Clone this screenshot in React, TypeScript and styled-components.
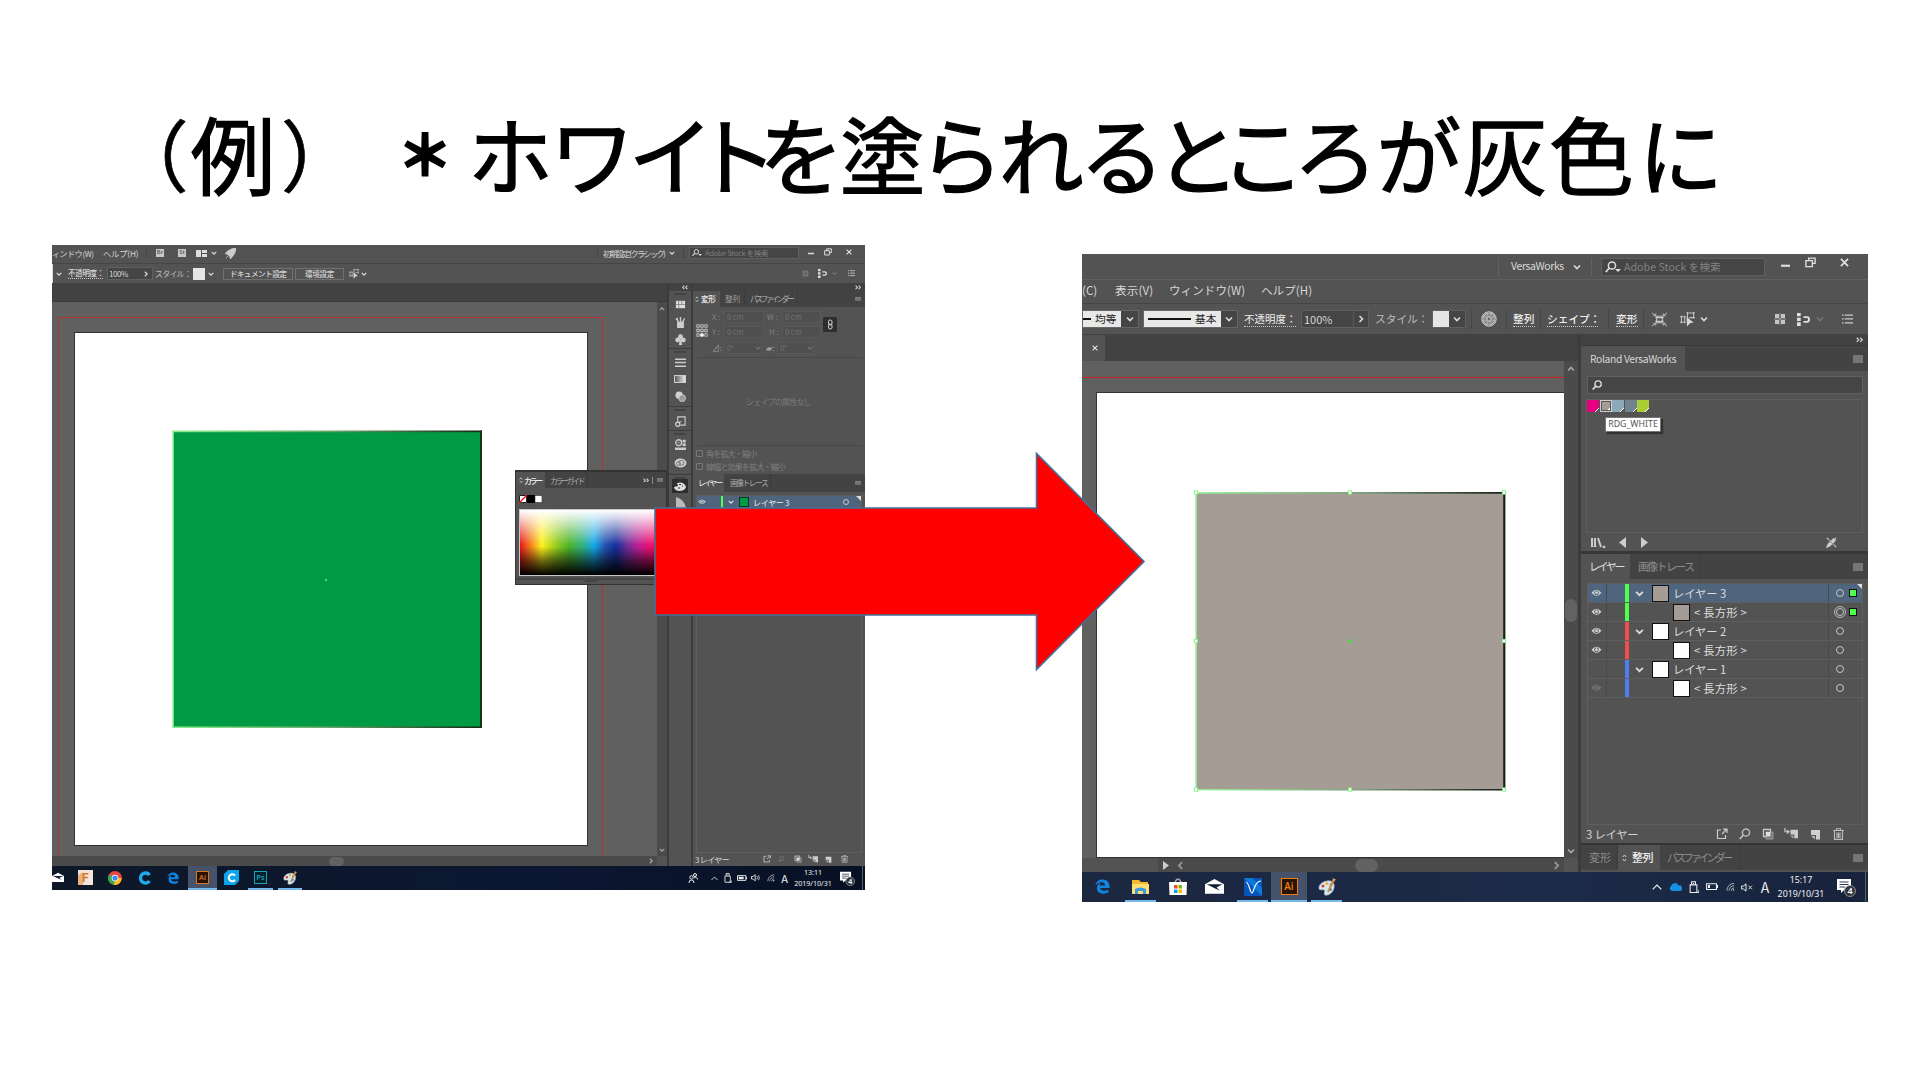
import React from "react";
import styled, { createGlobalStyle } from "styled-components";

const Global = createGlobalStyle`
  * { box-sizing: border-box; }
  body { margin: 0; background: #fff; overflow: hidden; font-family: "Noto Sans CJK JP", "Noto Sans", sans-serif; }
  svg { display: block; }
`;

/* ---------- slide ---------- */
const Slide = styled.main`
  position: relative; width: 1920px; height: 1080px; background: #fff;
  display: flex; flex-direction: column; overflow: hidden;
`;
const Title = styled.h1`
  margin: 0; height: 245px; padding: 90px 0 0 156px; white-space: nowrap;
  font-size: 85px; line-height: 124px; font-weight: 400; color: #000; display: flex;
  font-feature-settings: "palt"; -webkit-text-stroke: 1.3px #000;
`;
const Glyph = styled.span<{ $gap: number; $w: number; $s?: number; $stroke?: number }>`
  flex: none; width: ${p => p.$w}px; margin-left: ${p => p.$gap}px; font-size: ${p => p.$s || 85}px;
  -webkit-text-stroke-width: ${p => p.$stroke ?? 1.3}px;
  display: flex; justify-content: center;
`;
const Shots = styled.div`display: flex; align-items: flex-start; padding-left: 52px; gap: 217px;`;
const Shot = styled.section<{ $w: number; $h: number; $top?: number }>`
  flex: none; width: ${p => p.$w}px; height: ${p => p.$h}px; margin-top: ${p => p.$top || 0}px;
  background: #535353; display: flex; flex-direction: column; overflow: hidden;
`;
const ArrowLayer = styled.svg`position: absolute; left: 654px; top: 450px;`;

/* ---------- shared parts ---------- */
const Bar = styled.div<{ $h: number; $bg?: string; $line?: string; $pb?: number }>`
  flex: none; height: ${p => p.$h}px; display: flex; align-items: center; overflow: hidden;
  background: ${p => p.$bg || "#535353"}; padding-bottom: ${p => p.$pb || 0}px;
  border-bottom: ${p => (p.$line ? `1px solid ${p.$line}` : "0")};
`;
const Cell = styled.div<{ $ml?: number; $w?: number; $up?: number }>`
  flex: none; margin-left: ${p => p.$ml || 0}px; width: ${p => (p.$w ? p.$w + "px" : "auto")};
  margin-bottom: ${p => p.$up || 0}px; display: flex; align-items: center;
`;
const Plate = styled(Cell)`height: 18px; background: #e8e8e8;`;
const Label = styled.span<{ $ml?: number; $w?: number; $s: number; $c?: string; $ls?: number; $b?: boolean; $u?: boolean; $up?: number }>`
  flex: none; margin-left: ${p => p.$ml || 0}px; width: ${p => (p.$w ? p.$w + "px" : "auto")};
  margin-bottom: ${p => p.$up || 0}px; font-size: ${p => p.$s}px; line-height: ${p => Math.round(p.$s * 1.35)}px;
  color: ${p => p.$c || "#d6d6d6"}; letter-spacing: ${p => p.$ls || 0}px; white-space: nowrap;
  font-weight: ${p => (p.$b ? 500 : 400)};
  border-bottom: ${p => (p.$u ? "1px dotted #c8c8c8" : "0")};
`;
const Field = styled.div<{ $ml?: number; $mt?: number; $w: number; $h: number; $bg?: string; $bd?: string }>`
  flex: none; margin-left: ${p => p.$ml || 0}px; margin-top: ${p => p.$mt || 0}px; width: ${p => p.$w}px; height: ${p => p.$h}px;
  background: ${p => p.$bg || "#454545"}; border: 1px solid ${p => p.$bd || "#5f5f5f"};
  display: flex; align-items: center; overflow: hidden;
`;
const PushButton = styled(Field)`background: #535353; border-color: #707070; justify-content: center;`;
const Rule = styled.i<{ $ml?: number; $h: number; $c?: string }>`
  flex: none; width: 1px; margin-left: ${p => p.$ml || 0}px; height: ${p => p.$h}px; background: ${p => p.$c || "#474747"};
`;
const Chip = styled.i<{ $w: number; $h: number; $c: string; $ml?: number; $bd?: string }>`
  flex: none; display: block; width: ${p => p.$w}px; height: ${p => p.$h}px; background: ${p => p.$c};
  margin-left: ${p => p.$ml || 0}px; border: ${p => (p.$bd ? `1px solid ${p.$bd}` : "0")};
`;
const Body = styled.div`flex: 1; min-height: 0; display: flex;`;
const Column = styled.div<{ $w?: number; $bg?: string; $pl?: number }>`
  ${p => (p.$w ? `flex: none; width: ${p.$w}px;` : "flex: 1; min-width: 0;")}
  background: ${p => p.$bg || "#535353"}; padding-left: ${p => p.$pl || 0}px;
  display: flex; flex-direction: column;
`;
const Canvas = styled.div<{ $pt: number; $pl: number }>`
  flex: 1; min-height: 0; min-width: 0; background: #606060; overflow: hidden;
  padding: ${p => p.$pt}px 0 0 ${p => p.$pl}px;
`;
const Bleed = styled.div<{ $w: number; $h: number; $pt: number; $pl: number; $c: string; $open?: boolean }>`
  width: ${p => p.$w}px; height: ${p => p.$h}px; border: ${p => (p.$open ? "0" : "1px")} solid ${p => p.$c};
  border-top: 1px solid ${p => p.$c}; border-bottom: 0; padding: ${p => p.$pt}px 0 0 ${p => p.$pl}px;
`;
const Artboard = styled.div<{ $w: number; $h: number; $pt: number; $pl: number }>`
  width: ${p => p.$w}px; height: ${p => p.$h}px; background: #fff; border: 1px solid #333;
  padding: ${p => p.$pt}px 0 0 ${p => p.$pl}px;
`;
const Scroll = styled.div<{ $w: number }>`
  flex: none; width: ${p => p.$w}px; background: #4b4b4b; display: flex; flex-direction: column;
  align-items: center; justify-content: space-between; padding: 4px 0 3px;
`;
const Thumb = styled.i<{ $w: number; $h: number; $ml?: number }>`
  flex: none; display: block; width: ${p => p.$w}px; height: ${p => p.$h}px; border-radius: 7px; background: #626262;
  margin-left: ${p => p.$ml || 0}px;
`;
const Tab = styled.div<{ $w: number; $on?: boolean; $pl?: number }>`
  flex: none; width: ${p => p.$w}px; align-self: stretch; padding-left: ${p => p.$pl || 0}px; display: flex; align-items: center;
  background: ${p => (p.$on ? "#535353" : "#434343")}; border-right: 1px solid ${p => (p.$on ? "#535353" : "#3b3b3b")};
`;
const Grow = styled.div`flex: 1;`;

/* ---------- small icons ---------- */
type S = { w?: number; h?: number; c?: string };
const Chev = ({ w = 6, c = "#dcdcdc", d = "down" }: S & { d?: "down" | "up" | "left" | "right" }) => {
  const r = { down: 0, up: 180, left: 90, right: -90 }[d];
  return <svg width={w} height={w} viewBox="0 0 8 8"><path d="M1 2.5L4 5.5L7 2.5" transform={`rotate(${r} 4 4)`} fill="none" stroke={c} strokeWidth="1.6" /></svg>;
};
const Dbl = ({ w = 6, left }: { w?: number; left?: boolean }) => (
  <svg width={w} height={w * 0.8} viewBox="0 0 10 8"><path d="M1 1L4 4L1 7M6 1L9 4L6 7" transform={left ? "rotate(180 5 4)" : ""} fill="none" stroke="#d0d0d0" strokeWidth="1.8" /></svg>
);
const Menu = ({ w = 7, c = "#a8a8a8" }: S) => (
  <svg width={w} height={w * 0.8} viewBox="0 0 10 8"><path d="M0 1H10M0 3H10M0 5H10M0 7H10" stroke={c} strokeWidth="1.1" /></svg>
);
const Diamond = ({ w = 4 }: S) => (
  <svg width={w} height={w * 1.6} viewBox="0 0 5 8"><path d="M.8 3L2.5 1L4.2 3M.8 5L2.5 7L4.2 5" fill="none" stroke="#d8d8d8" strokeWidth="1" /></svg>
);
const Search = ({ w = 9, c = "#e0e0e0", more }: S & { more?: boolean }) => (
  <svg width={w} height={w * 0.75} viewBox="0 0 16 12"><circle cx="7" cy="4.5" r="3.6" fill="none" stroke={c} strokeWidth="1.5" /><path d="M4.3 7L.8 11" stroke={c} strokeWidth="1.8" />{more && <path d="M10 8H16L13 11Z" fill={c} />}</svg>
);
const Min = ({ w = 7 }: S) => <svg width={w} height={w} viewBox="0 0 10 10"><path d="M0 7.5H10" stroke="#ddd" strokeWidth="2.4" /></svg>;
const Restore = ({ w = 8 }: S) => <svg width={w} height={w} viewBox="0 0 12 12"><path d="M4 4V1.2H11V7H8M1 4H8V10.5H1Z" fill="none" stroke="#ddd" strokeWidth="1.5" /></svg>;
const Close = ({ w = 6, c = "#e0e0e0" }: S) => <svg width={w} height={w} viewBox="0 0 8 8"><path d="M.8.8L7.2 7.2M7.2.8L.8 7.2" stroke={c} strokeWidth="1.5" /></svg>;
const Pick = ({ w = 10 }: S) => (
  <svg width={w} height={w} viewBox="0 0 16 16"><path d="M0 5H6M0 11H6M1.500 4V12M5 4V12M8 0V6M14.500 0V7M7 1H16M10 6H16" fill="none" stroke="#c4c4c4" strokeWidth="1.1" /><path d="M7 5L14.500 11.500L11 11.700L7.500 15.500Z" fill="#d8d8d8" /></svg>
);
const Isolate = ({ w = 15 }: S) => (
  <svg width={w} height={w} viewBox="0 0 16 16"><path d="M5 4.500H11V11.500H5ZM3.500 6H12.500M3.500 10H12.500" fill="none" stroke="#c8c8c8" strokeWidth="1.100" /><path d="M0 1L4 4M16 1L12 4M0 15L4 12M16 15L12 12M1.500 4H4V1.500M14.500 4H12V1.500M1.500 12H4V14.500M14.500 12H12V14.500" stroke="#c8c8c8" strokeWidth="1" fill="none" /></svg>
);
const Dots = ({ w = 8, c = "#777" }: S) => <svg width={w} height={w} viewBox="0 0 12 12"><path d="M1 1H5V5H1ZM7 1H11V5H7ZM1 7H5V11H1ZM7 7H11V11H7Z" fill={c} /><path d="M6 0V12M0 6H12" stroke={c} strokeWidth=".6" /></svg>;
const Magnet = ({ w = 9 }: S) => <svg width={w} height={w} viewBox="0 0 14 14"><path d="M0 0H4V3.500H0ZM0 5H4V8.500H0ZM0 10H4V14H0Z" fill="#e0e0e0" /><path d="M7 4.500H10.500A2.500 2.500 0 0 1 10.500 9.500H7" fill="none" stroke="#e0e0e0" strokeWidth="2" /></svg>;
const List = ({ w = 7 }: S) => <svg width={w} height={w * 0.9} viewBox="0 0 10 9"><path d="M0 1H1.500M0 4.500H1.500M0 8H1.500M2.500 1H10M2.500 4.500H10M2.500 8H10" stroke="#ccc" strokeWidth="1.200" /></svg>;
const Eye = ({ w = 10, c = "#d4d4d4" }: S) => <svg width={w} height={w * 0.7} viewBox="0 0 14 10"><path d="M.5 5Q7-3 13.500 5Q7 13 .5 5Z" fill={c} /><circle cx="7" cy="5" r="3" fill="#535353" /><circle cx="7" cy="4.800" r="1.900" fill={c} /></svg>;
const Globe = () => <svg width="16" height="16" viewBox="0 0 16 16"><circle cx="8" cy="8" r="7.200" fill="#a9a9a9" stroke="#ccc" /><path d="M8 1V15M1 8H15M3 3L13 13M13 3L3 13" stroke="#707070" strokeWidth=".7" /><circle cx="8" cy="8" r="3.600" fill="#bbb" stroke="#707070" strokeWidth=".7" /><circle cx="8" cy="8" r="1.400" fill="#666" /></svg>;

const Export = ({ w }: { w: number }) => <svg width={w} height={w} viewBox="0 0 12 12"><path d="M5 2H1.500V10.500H9.500V7M7 1.200H11V5M11 1L6 6" fill="none" stroke="#ccc" strokeWidth="1.200" /></svg>;
const Mask = ({ w }: { w: number }) => <svg width={w} height={w} viewBox="0 0 12 12"><path d="M1.500 1.500H8.500V8.500H1.500Z" fill="none" stroke="#c8c8c8" strokeWidth="1.300" /><path d="M4 4H11V11H4Z" fill="#777" stroke="#aaa" strokeWidth=".8" /><path d="M4 4H8.500V8.500H4Z" fill="#ddd" /></svg>;
const SubLayer = ({ w }: { w: number }) => <svg width={w} height={w * 0.8} viewBox="0 0 15 12"><path d="M1 0V4H5M3 2L5.500 4L3 6" fill="none" stroke="#ccc" strokeWidth="1.200" /><path d="M7 2H15V11H11V7H7Z" fill="#ccc" /><path d="M6.500 8H10V11.500Z" fill="#aaa" /></svg>;
const NewLayer = ({ w }: { w: number }) => <svg width={w} height={w} viewBox="0 0 11 11"><path d="M1 1H10V10.500H6V6H1Z" fill="#d0d0d0" /><path d="M1 7H5V10.500Z" fill="#bbb" /></svg>;
const Trash = ({ w }: { w: number }) => <svg width={w} height={w * 1.1} viewBox="0 0 11 12"><path d="M0 2.500H11M3.500 2V.700H7.500V2M1.500 3V11.300H9.500V3M4 4.500V10M5.500 4.500V10M7 4.500V10" fill="none" stroke="#bdbdbd" strokeWidth="1.100" /></svg>;

/* ---------- taskbar ---------- */
const TaskRow = styled.div<{ $h: number; $bg: string }>`
  flex: none; height: ${p => p.$h}px; background: ${p => p.$bg}; display: flex; align-items: stretch; overflow: hidden;
`;
const Task = styled.div<{ $w: number; $ml?: number; $on?: boolean; $run?: boolean }>`
  flex: none; width: ${p => p.$w}px; margin-left: ${p => p.$ml || 0}px; display: flex; align-items: center; justify-content: center;
  background: ${p => (p.$on ? "#465269" : "transparent")};
  border-bottom: ${p => (p.$run ? "2px solid #76b9ed" : "2px solid transparent")}; border-top: 1px solid transparent;
`;
const Tray = styled.div<{ $ml: number; $w: number }>`
  flex: none; margin-left: ${p => p.$ml}px; width: ${p => p.$w}px; display: flex; align-items: center; justify-content: center;
`;
const Clock = styled.div<{ $ml: number; $w: number; $s: number; $lh: number }>`
  flex: none; margin-left: ${p => p.$ml}px; width: ${p => p.$w}px; font: ${p => p.$s}px/${p => p.$lh}px "Noto Sans", sans-serif; color: #f0f2f5;
  white-space: nowrap; display: flex; flex-direction: column; justify-content: center; align-items: center;
`;
const Adobe = styled.div<{ $s: number; $c: string; $bg: string }>`
  width: ${p => p.$s}px; height: ${p => p.$s}px; border: ${p => (p.$s > 14 ? 1.5 : 1)}px solid ${p => p.$c}; background: ${p => p.$bg}; color: ${p => p.$c};
  font: 600 ${p => p.$s * 0.58}px/1 "Open Sans", sans-serif; display: flex; align-items: center; justify-content: center;
`;
const MailI = ({ w }: { w: number }) => <svg width={w} height={w * 0.78} viewBox="0 0 18 14"><path d="M0 5L9 0L18 5V14H0Z" fill="#fff" /><path d="M1.500 5H16.500L11 8L14 11Z" fill="#14203a" /></svg>;
const EdgeI = ({ w }: { w: number }) => <svg width={w} height={w} viewBox="0 0 16 16"><path d="M.5 7C1.200 2.500 4.500.500 8.300.500C13 .500 15.500 4 15.500 8V9.500H5.500C5.700 12.300 10.500 13.700 14.300 11.500V14.500C8.500 17.300 2 15.200 2 9.600C2 7 3.800 5 6 4.200C5.300 5 5 6.200 5 7H10.700C10.700 4.500 9.200 3.500 7.200 3.500C4.500 3.500 2 5 .5 7Z" fill="#1383e0" /></svg>;
const PaintI = ({ w }: { w: number }) => <svg width={w} height={w} viewBox="0 0 18 18"><path d="M9 3C14 2 17 5 16 10C15 15 10 18 7 17C5 16 8 13 6 12C4 11 1 13 1 10C1 6 5 3.500 9 3Z" fill="#d9e6ee" stroke="#9db6c4" strokeWidth=".7" /><circle cx="5" cy="8" r="1.500" fill="#d9403a" /><circle cx="9" cy="5.500" r="1.500" fill="#e8b32e" /><circle cx="13" cy="7" r="1.400" fill="#4ea646" /><circle cx="12.500" cy="11.500" r="1.400" fill="#3c87d0" /><path d="M15.500 2L10 14" stroke="#c98b4c" strokeWidth="2" /><path d="M14.500 0L18 1.500L15.500 4Z" fill="#d9a066" /></svg>;
const Up = ({ w }: { w: number }) => <svg width={w} height={w * 0.6} viewBox="0 0 10 6"><path d="M.7 5.300L5 1L9.300 5.300" fill="none" stroke="#eee" strokeWidth="1.200" /></svg>;
const Usb = ({ w }: { w: number }) => <svg width={w} height={w * 1.25} viewBox="0 0 10 13"><path d="M2.500 4V.700H6.500V4M1 4H8V12H1ZM4 2.500H5" fill="none" stroke="#eee" strokeWidth="1.100" /><path d="M6 12H10V9.500" stroke="#eee" fill="none" /></svg>;
const Battery = ({ w, full }: { w: number; full?: boolean }) => <svg width={w} height={w * 0.6} viewBox="0 0 12 7"><path d="M.6.600H10.500V6.400H.600ZM11.500 2V5" fill="none" stroke="#eee" strokeWidth="1.100" /><path d={full ? "M2 2H8V5H2Z" : "M2 2H4V5H2Z"} fill="#eee" /></svg>;
const Wifi = ({ w }: { w: number }) => <svg width={w} height={w} viewBox="0 0 10 10"><path d="M1 9A8 8 0 0 1 9 1M3.500 9A5.500 5.500 0 0 1 9 3.500M6 9A3 3 0 0 1 9 6" fill="none" stroke="#b8bec8" strokeWidth="1" /><path d="M7.500 9A1.500 1.500 0 0 1 9 7.500V9Z" fill="#fff" /></svg>;
const Vol = ({ w, mute }: { w: number; mute?: boolean }) => <svg width={w} height={w * 0.75} viewBox="0 0 12 9"><path d="M.6 3H2.500L5 .800V8.200L2.500 6H.600Z" fill="none" stroke="#eee" /><path d={mute ? "M7.500 2.700L11 6.300M11 2.700L7.500 6.300" : "M7 2.500Q8.300 4.500 7 6.500M9 1.500Q11 4.500 9 7.500"} fill="none" stroke="#ddd" /></svg>;
const Notice = ({ w }: { w: number }) => <svg width={w} height={w} viewBox="0 0 19 19"><path d="M0 1H14V12H7L4 15V12H0Z" fill="#fff" /><path d="M2.500 4H11.500M2.500 6.500H11.500M2.500 9H8" stroke="#2a3850" /><circle cx="13" cy="13" r="5.500" fill="#30353d" stroke="#aaa" strokeWidth=".8" /><text x="13" y="16.300" textAnchor="middle" fontSize="9" fontWeight="600" fontFamily="Noto Sans" fill="#fff">4</text></svg>;

/* ---------- layers ---------- */
const LayerRow = styled.div<{ $on?: boolean; $h?: number }>`
  flex: none; height: ${p => p.$h || 19}px; display: flex; align-items: center; background: ${p => (p.$on ? "#4f657d" : "#535353")};
  border-bottom: 1px solid #5e5e5e;
`;
const RingMark = styled.i<{ $s: number; $dbl?: boolean }>`
  display: block; width: ${p => p.$s}px; height: ${p => p.$s}px; border: 1.4px solid #c8c8c8; border-radius: 50%;
  outline: ${p => (p.$dbl ? "1px solid #b8b8b8" : "0")}; outline-offset: 1px;
`;
const Frame = styled.div<{ $m: string; $h: number }>`
  flex: none; margin: ${p => p.$m}; height: ${p => p.$h}px; border: 1px solid #5e5e5e; display: flex; flex-direction: column; overflow: hidden;
`;
const Corner = styled.i`align-self: flex-start; border-top: 5px solid #ddd; border-left: 5px solid transparent; width: 0; height: 0;`;
const Vert = styled.div<{ $w: number; $ml?: number; $c?: string }>`
  flex: none; align-self: stretch; width: ${p => p.$w}px; margin-left: ${p => p.$ml || 0}px; background: ${p => p.$c || "#494949"};
`;
const layers = [
  { name: "レイヤー 3", child: false, c: "#4eff4e", thumb: "#a59c96", eye: "#c6d4e0", on: true, sel: true },
  { name: "< 長方形 >", child: true, c: "#4eff4e", thumb: "#a59c96", eye: "#d4d4d4", sel: true },
  { name: "レイヤー 2", child: false, c: "#f24c4c", thumb: "#fff", eye: "#d4d4d4" },
  { name: "< 長方形 >", child: true, c: "#f24c4c", thumb: "#fff", eye: "#d4d4d4" },
  { name: "レイヤー 1", child: false, c: "#4f7df2", thumb: "#fff", eye: "" },
  { name: "< 長方形 >", child: true, c: "#4f7df2", thumb: "#fff", eye: "#757575" },
];

/* ---------- transform panel ---------- */
const Pad = styled.div<{ $h: number; $pl?: number }>`flex: none; height: ${p => p.$h}px; padding-left: ${p => p.$pl || 0}px; display: flex; align-items: center;`;
const Rows = styled.div`flex: none; width: 110px; display: flex; flex-direction: column;`;
const Line = styled.i<{ $c?: string }>`flex: none; display: block; height: 1px; margin: 0 3px 0 4px; background: ${p => p.$c || "#484848"};`;
const Dim = styled(Field)`background: #4f4f4f; border-color: #585858; padding-left: 2px; font-size: 7.5px; color: #747474; line-height: 10px; justify-content: space-between;`;
const Check = styled.i`flex: none; width: 7px; height: 7px; border: 1px solid #7a7a7a; border-radius: 1px;`;

/* ---------- icon dock ---------- */
const DockGroup = styled.div<{ $h: number }>`
  flex: none; height: ${p => p.$h}px; border-bottom: 1px solid #3d3d3d; display: flex; flex-direction: column; align-items: center;
  padding-top: 2px;
`;
const Handle = styled.i`flex: none; width: 12px; height: 2px; background: #444;`;
const DockIcon = styled.div<{ $h: number; $on?: boolean }>`
  flex: none; width: 16px; height: ${p => p.$h}px; display: flex; align-items: center; justify-content: center;
  background: ${p => (p.$on ? "#2e2e2e" : "transparent")};
`;
const D = ({ children }: { children: React.ReactNode }) => <svg width="11" height="11" viewBox="0 0 12 12">{children}</svg>;

/* ---------- floating colour panel ---------- */
const FloatPanel = styled.div`
  position: absolute; left: 515px; top: 470px; width: 152px; height: 115px; background: #535353; border: 1px solid #333;
  border-top-width: 2px; display: flex; flex-direction: column;
`;
const Spectrum = styled.div`
  flex: none; height: 67px; margin: 6px 0 0 3px; border: 1px solid #c8c8c8;
  background:
    linear-gradient(180deg, #fff 0%, rgba(255,255,255,.8) 12%, rgba(255,255,255,.35) 36%, rgba(255,255,255,0) 54%, rgba(0,0,0,0) 56%, rgba(0,0,0,.55) 78%, #000 100%),
    linear-gradient(90deg, #e8141c 0%, #f58a1c 8%, #fff01c 15%, #8cc820 26%, #4cb42c 34%, #30b080 43%, #14a8e8 51%, #2450b0 59%, #14309c 66%, #7c2c98 75%, #c81c90 83%, #ee1070 90%, #e8142c 100%);
`;
const Grip = styled.div`flex: none; margin-top: 2px; height: 6px; border-top: 2px solid #444; display: flex; justify-content: center;`;

const Tooltip = styled.div`
  position: absolute; left: 1605px; top: 417px; width: 56px; height: 15px; background: #fff; border: 1px solid #777; color: #555;
  font: 8.8px/12px "Noto Sans", sans-serif; text-align: center; box-shadow: 2px 2px 1px rgba(0,0,0,.4); white-space: nowrap;
`;
const Swatch = styled.i<{ $c: string; $sel?: boolean }>`
  display: block; width: 12px; height: 12px; margin-right: .5px; background: linear-gradient(135deg, ${p => p.$c} 80%, #fff 80%, #fff 86%, #555 86%);
  border: ${p => (p.$sel ? "1px solid #d0d0d0" : "0")}; box-shadow: ${p => (p.$sel ? "inset 0 0 0 1px #555" : "none")};
`;

/* glyph, gap before it, ink width, optional size, optional stroke */
const titleGlyphs: [string, number, number, number?, number?][] = [
  ["（", 0, 21, 78, 0.6], ["例", 17, 78], ["）", 20, 22, 78, 0.6], ["＊", 90, 42, 53, 4], ["ホ", 27, 75], ["ワ", 13, 60], ["イ", 17, 62], ["ト", 18, 41],
  ["を", 7, 66], ["塗", 12, 77], ["ら", 13, 56], ["れ", 10, 81], ["る", 9, 63], ["と", 14, 56], ["こ", 11, 58], ["ろ", 11, 63],
  ["が", 12, 80], ["灰", 8, 78], ["色", 9, 77], ["に", 15, 70],
];

function LeftShot() {
  return (
    <Shot $w={813} $h={645}>
      <Bar $h={19} $line="#454545" $pb={2}>
        <Label $s={8} $w={42} $ls={-0.4}>ィンドウ(W)</Label>
        <Label $s={8.2} $w={36} $ml={9} $ls={-0.1}>ヘルプ(H)</Label>
        <Rule $h={12} $ml={7} />
        <Cell $ml={8}><Adobe $s={10} $c="#555" $bg="#c8c8c8">Br</Adobe></Cell>
        <Cell $ml={12}><Adobe $s={10} $c="#555" $bg="#c8c8c8">St</Adobe></Cell>
        <Cell $ml={9} $w={15}><svg width="11" height="7" viewBox="0 0 11 7"><path d="M0 0H5V7H0ZM6 0H11V3H6ZM6 4H11V7H6Z" fill="#ddd" /></svg></Cell>
        <Cell $w={14}><Chev /></Cell>
        <Cell><svg width="11" height="11" viewBox="0 0 12 12"><path d="M12 0C7 0 3 3 0 6L3 7L5 9L6 12C8 9 12 6 12 0ZM1 11L4 8" fill="#ccc" stroke="#ccc" strokeWidth=".8" /></svg></Cell>
        <Grow />
        <Rule $h={12} />
        <Label $s={8.2} $ml={5} $w={66} $ls={-1.65}>初期設定 (クラシック)</Label>
        <Cell $w={14}><Chev /></Cell>
        <Rule $h={12} />
        <Field $w={110} $h={12} $ml={5}><Cell $ml={2} $w={13}><Search more w={10} /></Cell><Label $s={7.4} $c="#808080" $ls={-0.25}>Adobe Stock を検索</Label></Field>
        <Cell $ml={9} $w={16} $up={3}><Min w={6} /></Cell><Cell $w={22} $up={3}><Restore /></Cell><Cell $w={19} $up={3}><Close /></Cell>
      </Bar>
      <Bar $h={20} $line="#414141">
        <Vert $w={1} $c="#ddd" />
        <Cell $ml={3} $w={12}><Chev /></Cell>
        <Label $s={7.5} $u $w={35} $b $ls={-0.3}>不透明度：</Label>
        <Field $w={46} $h={13} $ml={4}><Label $s={8} $ls={-0.4} $ml={1}>100%</Label><Cell $ml={15}><Chev d="right" /></Cell></Field>
        <Label $s={8} $ml={2} $w={38} $c="#bdbdbd" $ls={-0.8}>スタイル：</Label>
        <Chip $w={12} $h={12} $c="#e6e6e6" /><Cell $ml={3}><Chev /></Cell>
        <PushButton $w={70} $h={12} $ml={9}><Label $s={7.7} $b $ls={-0.6}>ドキュメント設定</Label></PushButton>
        <PushButton $w={49} $h={12} $ml={2}><Label $s={7.5} $b $ls={-0.3}>環境設定</Label></PushButton>
        <Cell $ml={5}><Pick /></Cell><Cell $ml={2}><Chev /></Cell>
        <Grow />
        <Dots w={7} /><Cell $ml={9}><Magnet w={9} /></Cell><Cell $ml={5}><Chev w={5} c="#888" /></Cell><Cell $ml={11} $w={17}><List /></Cell>
      </Bar>
      <Body>
        <Column>
          <Bar $h={18} $bg="#424242" $line="#3a3a3a" />
          <Body>
            <Canvas $pt={15} $pl={6}>
              <Bleed $w={545} $h={560} $pt={14} $pl={15} $c="#b43232">
                <Artboard $w={514} $h={514} $pt={97} $pl={97}>
                  <svg width="312" height="300" viewBox="0 0 312 300">
                    <defs><linearGradient id="edge"><stop offset="0" stopColor="#8cf08c" /><stop offset=".5" stopColor="#6ca86c" /><stop offset="1" stopColor="#122812" /></linearGradient></defs>
                    <rect x="1" y="1" width="308" height="296" fill="#009944" />
                    <path d="M1 298V2" stroke="#9ff59f" strokeWidth="1.500" />
                    <rect x="0" y="0.500" width="310" height="1.700" fill="url(#edge)" /><rect x="0" y="296.500" width="310" height="1.500" fill="url(#edge)" />
                    <path d="M309 .5V298" stroke="#14351a" strokeWidth="2" />
                    <circle cx="154" cy="150" r="1.200" fill="#5ccf7d" />
                  </svg>
                </Artboard>
              </Bleed>
            </Canvas>
            <Scroll $w={10}><Chev c="#aaa" d="up" /><Chev c="#aaa" /></Scroll>
          </Body>
          <Bar $h={10} $bg="#4a4a4a"><Thumb $w={15} $h={9} $ml={277} /><Grow /><Chev c="#aaa" d="right" /><Vert $w={10} $ml={3} $c="#535353" /></Bar>
        </Column>
        <Vert $w={2} $c="#3c3c3c" />
        <Column $w={22}>
          <Bar $h={7} $bg="#424242"><Cell $ml={13}><Dbl left w={6} /></Cell></Bar>
          <DockGroup $h={58}><Handle />
            <DockIcon $h={19}><D><path d="M1 2H11V10H1Z" fill="#ddd" /><path d="M1 6H11M4 2V10M7.500 2V6" stroke="#777" strokeWidth=".8" /></D></DockIcon>
            <DockIcon $h={17}><D><path d="M3 6H9V12H3ZM4 6L2 2M6 6V0M8 6L10.500 1.500M1 3L3 1" fill="#ccc" stroke="#ccc" strokeWidth="1.500" /></D></DockIcon>
            <DockIcon $h={17}><D><circle cx="6" cy="3" r="2.700" fill="#ccc" /><circle cx="3" cy="6.500" r="2.700" fill="#ccc" /><circle cx="9" cy="6.500" r="2.700" fill="#ccc" /><path d="M6 5L8 12H4Z" fill="#ccc" /></D></DockIcon>
          </DockGroup>
          <DockGroup $h={58}><Handle />
            <DockIcon $h={18}><D><path d="M0 2.500H12M0 6H12M0 10H12" stroke="#ccc" strokeWidth="1.700" /></D></DockIcon>
            <DockIcon $h={16}><svg width="12" height="9"><defs><linearGradient id="gd"><stop stopColor="#555" /><stop offset="1" stopColor="#eee" /></linearGradient></defs><rect x=".5" y=".5" width="11" height="7" fill="url(#gd)" stroke="#ccc" /></svg></DockIcon>
            <DockIcon $h={18}><D><circle cx="4.500" cy="4.500" r="4" fill="#d0d0d0" /><circle cx="7.800" cy="7.800" r="3.700" fill="#999" stroke="#ddd" strokeWidth=".8" /></D></DockIcon>
          </DockGroup>
          <DockGroup $h={24}><Handle />
            <DockIcon $h={20}><D><path d="M3 6V1H11V10H6" fill="none" stroke="#ccc" strokeWidth="1.200" /><circle cx="3" cy="9" r="2.300" fill="none" stroke="#ddd" strokeWidth="1.200" /><path d="M4 7L7 6" stroke="#ddd" /></D></DockIcon>
          </DockGroup>
          <DockGroup $h={44}><Handle />
            <DockIcon $h={19}><D><circle cx="4" cy="4" r="3.200" fill="none" stroke="#ccc" strokeWidth="1.400" /><path d="M2 4H6M4 2V6M8.500 1H11.500V3.500H8.500ZM8.500 5H11.500V7.500H8.500ZM0 9.500H12V12H0Z" fill="#ccc" stroke="#ccc" strokeWidth=".4" /></D></DockIcon>
            <DockIcon $h={18}><svg width="13" height="10" viewBox="0 0 13 10"><ellipse cx="6.500" cy="5" rx="6" ry="4.500" fill="#ccc" /><circle cx="4.500" cy="5.500" r="2" fill="none" stroke="#666" strokeWidth=".8" /><circle cx="7.500" cy="4.800" r="2.500" fill="none" stroke="#666" strokeWidth=".8" /></svg></DockIcon>
          </DockGroup>
          <DockGroup $h={58}><Handle />
            <DockIcon $h={14} $on><svg width="12" height="9" viewBox="0 0 12 9"><path d="M3 1Q10-1 12 5Q11 9 5 9Q0 8 0 5L4 4Z" fill="#ddd" /><path d="M5 2.500H7M8 4H9M4 6H6" stroke="#333" strokeWidth="1.100" /></svg></DockIcon>
            <DockIcon $h={18}><svg width="11" height="11"><path d="M1 0Q10 3 11 11H1Z" fill="#bbb" /></svg></DockIcon>
          </DockGroup>
        </Column>
        <Vert $w={2} $c="#3c3c3c" />
        <Column $w={172}>
          <Bar $h={7} $bg="#424242"><Grow /><Dbl w={6} /><Vert $w={4} $c="transparent" /></Bar>
          <Bar $h={16} $bg="#434343">
            <Tab $w={27} $on $pl={2}><Diamond /><Label $s={7.7} $b $ml={2} $ls={-0.5} $c="#eee">変形</Label></Tab>
            <Tab $w={25} $pl={5}><Label $s={7.7} $ls={-0.3} $c="#a0a0a0">整列</Label></Tab>
            <Tab $w={53} $pl={5}><Label $s={7.7} $ls={-2.4} $c="#b0b0b0">パスファインダー</Label></Tab>
            <Grow /><Menu w={6} /><Vert $w={4} $c="transparent" />
          </Bar>
          <Pad $h={50} $pl={3}>
            <Cell $w={16} $up={4}><svg width="12" height="13" viewBox="0 0 12 13"><path d="M2 2H10V11H2ZM2 6.500H10M6 2V11" fill="none" stroke="#aaa" strokeWidth=".7" /><g fill="#535353" stroke="#ccc" strokeWidth=".8">{[2, 6, 10].map(x => [2, 6.5, 11].map(y => <rect key={`${x}-${y}`} x={x - 1.2} y={y - 1.2} width="2.400" height="2.400" />))}</g><circle cx="6" cy="11" r="1.600" fill="#fff" /></svg></Cell>
            <Rows>
              <Pad $h={15}><Label $s={7.7} $w={12} $c="#808080">X :</Label><Dim $w={40} $h={12}>0 cm</Dim><Label $s={7.7} $ml={3} $w={15} $c="#808080">W :</Label><Dim $w={39} $h={12}>0 cm</Dim></Pad>
              <Pad $h={16}><Label $s={7.7} $w={12} $c="#808080">Y :</Label><Dim $w={40} $h={12}>0 cm</Dim><Label $s={7.7} $ml={5} $w={13} $c="#808080">H :</Label><Dim $w={39} $h={12}>0 cm</Dim></Pad>
              <Pad $h={15}><Label $s={7.7} $w={12} $c="#a0a0a0">⊿:</Label><Dim $w={38} $h={12}>0°<Chev c="#777" /></Dim><Label $s={7.7} $ml={4} $w={11} $c="#a0a0a0">▰:</Label><Dim $w={37} $h={12}>0°<Chev c="#777" /></Dim></Pad>
            </Rows>
            <Cell $ml={1} $up={15}><svg width="14" height="15"><rect width="14" height="15" rx="1.500" fill="#2e2e2e" /><rect x="5.500" y="3" width="3.500" height="5" rx="1.700" fill="none" stroke="#ddd" /><rect x="5.500" y="7" width="3.500" height="5" rx="1.700" fill="none" stroke="#ddd" /></svg></Cell>
          </Pad>
          <Line />
          <Pad $h={87} $pl={53}><Label $s={8} $c="#7c7c7c" $ls={-0.8}>シェイプの属性なし</Label></Pad>
          <Line />
          <Pad $h={15} $pl={3}><Check /><Label $ml={3} $s={8} $c="#808080" $ls={-0.8}>角を拡大・縮小</Label></Pad>
          <Pad $h={11} $pl={3}><Check /><Label $ml={3} $s={8} $c="#808080" $ls={-0.8}>線幅と効果を拡大・縮小</Label></Pad>
          <Pad $h={2} />
          <Bar $h={18} $bg="#434343">
            <Tab $w={31} $on $pl={5}><Label $s={7.7} $ls={-1.8} $c="#eee">レイヤー</Label></Tab>
            <Tab $w={47} $pl={6}><Label $s={7.7} $ls={-1.4} $c="#a8a8a8">画像トレース</Label></Tab>
            <Grow /><Menu w={6} /><Vert $w={4} $c="transparent" />
          </Bar>
          <Frame $m="3px 3px 0 3px" $h={358}>
            <LayerRow $on $h={13}>
              <Cell $ml={1} $w={23}><Eye w={8} c="#c6d4e0" /></Cell><Vert $w={2} $c="#4eff4e" /><Cell $ml={5}><Chev /></Cell>
              <Chip $ml={5} $w={10} $h={10} $c="#009944" $bd="#132" /><Label $s={8} $ml={4} $c="#eee" $ls={-0.3}>レイヤー 3</Label><Grow /><RingMark $s={6} /><Cell $ml={7} /><Corner />
            </LayerRow>
          </Frame>
          <Pad $h={12} $pl={2}>
            <Label $s={8} $w={68} $ls={-0.7}>3 レイヤー</Label><Export w={8} /><Cell $ml={7}><Search w={9} c="#777" /></Cell><Cell $ml={7}><Mask w={8} /></Cell><Cell $ml={6}><SubLayer w={10} /></Cell><Cell $ml={7}><NewLayer w={7} /></Cell><Cell $ml={9}><Trash w={7} /></Cell>
          </Pad>
        </Column>
      </Body>
      <TaskRow $h={24} $bg="linear-gradient(90deg,#0d1828,#0c1733 60%,#071022)">
        <Task $w={12}><MailI w={14} /></Task>
        <Task $w={16} $ml={13}><svg width="15" height="15" viewBox="0 0 15 15"><path d="M0 0H15V15H0Z" fill="#f3e5d8" /><path d="M0 5L5 2V15H0Z" fill="#e8b27e" /><text x="4" y="12" fontSize="12" fontWeight="700" fontFamily="Roboto" fill="#d87a20">F</text></svg></Task>
        <Task $w={16} $ml={14}><svg width="14" height="14" viewBox="0 0 14 14"><circle cx="7" cy="7" r="7" fill="#e8463a" /><path d="M7 7L1 3.500A7 7 0 0 0 6.500 14Z" fill="#34a853" /><path d="M7 7H13.500A7 7 0 0 1 6 14Z" fill="#fbc116" /><circle cx="7" cy="7" r="3.300" fill="#fff" /><circle cx="7" cy="7" r="2.600" fill="#4285f4" /></svg></Task>
        <Task $w={16} $ml={13}><svg width="14" height="14" viewBox="0 0 14 14"><path d="M12.500 4A5 5 0 1 0 12.500 10" fill="none" stroke="#22a8ec" strokeWidth="3.400" /></svg></Task>
        <Task $w={16} $ml={13}><EdgeI w={12} /></Task>
        <Task $w={29} $ml={7} $on $run><Adobe $s={13} $c="#d9781c" $bg="#2a1203">Ai</Adobe></Task>
        <Task $w={16} $ml={6}><svg width="15" height="15" viewBox="0 0 15 15"><path d="M4 0H15V11L11 15H0V4Z" fill="#0aa5ea" /><path d="M11 5.500A3.500 3.500 0 1 0 11 10" fill="none" stroke="#fff" strokeWidth="2.200" /></svg></Task>
        <Task $w={25} $ml={9} $run><Adobe $s={13} $c="#17a6b8" $bg="#04222e">Ps</Adobe></Task>
        <Task $w={24} $ml={5} $run><PaintI w={14} /></Task>
        <Grow />
        <Tray $ml={0} $w={10}><svg width="10" height="10" viewBox="0 0 10 10"><circle cx="3.500" cy="4.500" r="1.700" fill="none" stroke="#eee" /><path d="M1 10Q1 7 3.500 7Q6 7 6 10" fill="none" stroke="#eee" /><circle cx="7" cy="2" r="1.500" fill="none" stroke="#eee" /><path d="M6 5Q9 3 9.500 6.500" fill="none" stroke="#eee" /></svg></Tray>
        <Tray $ml={13} $w={7}><Up w={8} /></Tray><Tray $ml={5} $w={9}><Usb w={8} /></Tray><Tray $ml={5} $w={10}><Battery w={10} full /></Tray>
        <Tray $ml={4} $w={10}><Vol w={10} /></Tray><Tray $ml={6} $w={8}><Wifi w={8} /></Tray>
        <Tray $ml={5} $w={9}><Label $s={11} $c="#eee">A</Label></Tray>
        <Clock $ml={6} $w={36} $s={7.1} $lh={11}><span>13:11</span><span>2019/10/31</span></Clock>
        <Tray $ml={9} $w={15}><Notice w={15} /></Tray><Vert $w={1} $ml={7} $c="#56606e" /><Vert $w={2} $c="transparent" />
      </TaskRow>
    </Shot>
  );
}

function RightShot() {
  return (
    <Shot $w={786} $h={648} $top={9}>
      <Bar $h={26} $line="#606060">
        <Grow /><Rule $h={18} $c="#626262" />
        <Label $s={10.5} $ml={12} $w={62} $ls={-0.4} $up={1}>VersaWorks</Label><Cell $w={18}><Chev w={8} /></Cell><Rule $h={18} $c="#626262" />
        <Field $w={164} $h={18} $ml={9}><Cell $ml={3} $w={19}><Search w={16} more /></Cell><Label $s={10.7} $c="#828282">Adobe Stock を検索</Label></Field>
        <Cell $ml={16} $w={24} $up={7}><Min w={9} /></Cell><Cell $w={35} $up={8}><Restore w={11} /></Cell><Cell $w={28} $up={8}><Close w={9} /></Cell>
      </Bar>
      <Bar $h={24} $line="#464646">
        <Label $s={11.5} $w={33} $up={4}>(C)</Label><Label $s={11.5} $w={54} $up={4} $ls={0.2}>表示(V)</Label><Label $s={11.5} $w={92} $up={4} $ls={0.1}>ウィンドウ(W)</Label><Label $s={11.5} $up={4} $ls={0.1}>ヘルプ(H)</Label>
      </Bar>
      <Bar $h={31} $line="#414141">
        <Field $w={57} $h={18} $bd="#666"><Plate $w={38}><Chip $w={8} $h={2} $c="#111" /><Label $s={10.7} $c="#222" $ml={4}>均等</Label></Plate><Cell $ml={5}><Chev w={8} /></Cell></Field>
        <Field $w={95} $h={18} $ml={4} $bd="#666"><Plate $w={77}><Chip $ml={4} $w={43} $h={2} $c="#111" /><Label $s={10.7} $c="#222" $ml={4}>基本</Label></Plate><Cell $ml={4}><Chev w={8} /></Cell></Field>
        <Label $s={10.5} $ml={6} $w={52} $u $c="#eee">不透明度：</Label>
        <Field $w={68} $h={18} $ml={5}><Label $s={11} $ml={2} $w={49}>100%</Label><Rule $h={18} $c="#5a5a5a" /><Cell $ml={3}><Chev w={8} d="right" /></Cell></Field>
        <Label $s={10.7} $ml={6} $w={57} $c="#bdbdbd">スタイル：</Label>
        <Field $w={34} $h={18}><Chip $w={16} $h={17} $c="#e5e5e5" /><Cell $ml={4}><Chev w={8} /></Cell></Field>
        <Rule $h={20} $ml={5} /><Cell $ml={9}><Globe /></Cell><Rule $h={20} $ml={9} />
        <Label $s={10.7} $ml={6} $w={22} $u $b $c="#eee">整列</Label><Rule $h={20} $ml={5} />
        <Label $s={10.7} $ml={6} $w={51} $u $b $c="#eee">シェイプ：</Label><Rule $h={20} $ml={10} />
        <Label $s={10.7} $ml={7} $w={22} $u $b $c="#eee">変形</Label><Rule $h={20} $ml={5} />
        <Cell $ml={8}><Isolate /></Cell><Cell $ml={13}><Pick w={15} /></Cell><Cell $ml={5}><Chev w={8} /></Cell>
        <Grow /><Dots w={12} c="#c4c4c4" /><Cell $ml={11}><Magnet w={13} /></Cell><Cell $ml={6}><Chev w={8} c="#777" /></Cell><Cell $ml={18} $w={26}><List w={11} /></Cell>
      </Bar>
      <Body>
        <Column>
          <Bar $h={26} $bg="#424242"><Tab $w={23} $on $pl={10}><Close w={6} /></Tab></Bar>
          <Body>
            <Canvas $pt={16} $pl={0}>
              <Bleed $w={483} $h={500} $pt={14} $pl={14} $c="#d22020" $open>
                <Artboard $w={475} $h={466} $pt={97} $pl={95}>
                  <svg width="320" height="304" viewBox="0 0 320 304">
                    <defs><linearGradient id="edge2"><stop offset="0" stopColor="#9cf59c" /><stop offset=".55" stopColor="#7c9c7c" /><stop offset="1" stopColor="#112211" /></linearGradient></defs>
                    <rect x="4" y="3" width="308" height="296.500" fill="#a59c96" />
                    <rect x="3" y="2" width="309" height="1.700" fill="url(#edge2)" /><rect x="3" y="299" width="309" height="1.500" fill="url(#edge2)" />
                    <path d="M4 3V299" stroke="#9cf59c" strokeWidth="1.500" /><path d="M312.300 2V300" stroke="#11250f" strokeWidth="2.200" />
                    {[[4, 2.5], [158, 2.5], [312, 2.5], [4, 151], [312, 151], [4, 299.5], [158, 299.5], [312, 299.5]].map(([x, y]) => <rect key={`${x}-${y}`} x={x - 1.7} y={y - 1.7} width="3.400" height="3.400" fill="#fff" stroke="#75ee75" strokeWidth=".8" />)}
                    <rect x="156.500" y="149.500" width="3" height="3" fill="#3ce63c" />
                  </svg>
                </Artboard>
              </Bleed>
            </Canvas>
            <Scroll $w={14}><Chev c="#aaa" d="up" w={8} /><Thumb $w={12} $h={23} /><Chev c="#aaa" w={8} /></Scroll>
          </Body>
          <Bar $h={14} $bg="#4a4a4a"><Vert $w={76} $c="#535353" /><Cell $ml={5} $w={13}><svg width="6" height="9"><path d="M0 0L6 4.500L0 9Z" fill="#ccc" /></svg></Cell><Chev d="left" w={9} c="#999" /><Thumb $w={23} $h={13} $ml={170} /><Grow /><Chev d="right" w={9} c="#999" /><Vert $w={14} $ml={3} $c="#535353" /></Bar>
        </Column>
        <Vert $w={3} $c="#3c3c3c" />
        <Column $w={287}>
          <Bar $h={11} $bg="#424242" $line="#383838"><Grow /><Dbl w={7} /><Vert $w={5} $c="transparent" /></Bar>
          <Bar $h={25} $bg="#434343">
            <Tab $w={104} $on $pl={9}><Label $s={10.3} $ls={-0.35}>Roland VersaWorks</Label></Tab><Grow /><Menu w={10} /><Vert $w={5} $c="transparent" />
          </Bar>
          <Cell $ml={6}><Field $w={276} $h={18} $mt={5}><Cell $ml={4}><Search w={14} /></Cell></Field></Cell>
          <Frame $m="5px 5px 0 5px" $h={134}><Cell>
            {["#e5007f", "#a59c96", "#8ca9b8", "#71838f", "#aacd34"].map((c, i) => <Swatch key={c} $c={c} $sel={i === 1} />)}
          </Cell></Frame>
          <Pad $h={18} $pl={10}>
            <svg width="15" height="11" viewBox="0 0 15 11"><path d="M1 1V10M4 1V10M7 1L10 10" stroke="#ccc" strokeWidth="2" /><path d="M0 9.500H6M12 9H14V11H12Z" stroke="#ccc" fill="#ccc" strokeWidth=".5" /></svg>
            <Cell $ml={13}><svg width="7" height="11"><path d="M7 0L0 5.500L7 11Z" fill="#ccc" /></svg></Cell><Cell $ml={15}><svg width="7" height="11"><path d="M0 0L7 5.500L0 11Z" fill="#ccc" /></svg></Cell>
            <Cell $ml={178}><svg width="11" height="11" viewBox="0 0 11 11"><path d="M1 1L10 10M10 1L1 10" stroke="#ccc" strokeWidth="1.200" /><path d="M0 11L1.500 7L7.500 1L10 3.500L4 9.500Z" fill="#ccc" /><path d="M2 2L9 9" stroke="#555" strokeWidth=".6" /></svg></Cell>
          </Pad>
          <Bar $h={3} $bg="#383838" />
          <Bar $h={25} $bg="#434343">
            <Tab $w={49} $on $pl={8}><Label $s={11} $ls={-2.4} $c="#ddd">レイヤー</Label></Tab>
            <Tab $w={71} $pl={8}><Label $s={11} $ls={-1.7} $c="#8c8c8c">画像トレース</Label></Tab>
            <Grow /><Menu w={10} /><Vert $w={5} $c="transparent" />
          </Bar>
          <Frame $m="4px 5px 0 6px" $h={242}>
            {layers.map((l, i) => (
              <LayerRow key={i} $on={l.on}>
                <Cell $ml={3} $w={15}>{l.eye && <Eye w={11} c={l.eye} />}</Cell><Vert $w={1} />
                <Vert $ml={18} $w={4} $c={l.c} />
                {l.child ? <Cell $w={44} /> : <Cell $ml={6} $w={17}><Chev w={9} /></Cell>}
                <Chip $w={17} $h={17} $c={l.thumb} $bd="#111" />
                <Label $s={11.3} $ml={4} $c="#ddd" $ls={l.child ? 0.2 : -0.1}>{l.name}</Label>
                <Grow /><Vert $w={1} />
                <Cell $w={11} $ml={7}><RingMark $s={8} $dbl={i === 1} /></Cell>
                <Cell $w={10} $ml={2}>{l.sel && <Chip $w={8} $h={8} $c="#4eff4e" $bd="#111" />}</Cell>
                {l.on ? <Corner style={{ marginLeft: -2 }} /> : <Cell $w={3} />}
              </LayerRow>
            ))}
          </Frame>
          <Pad $h={18} $pl={5}>
            <Label $s={11.3} $w={130} $ls={-0.2}>3 レイヤー</Label><Export w={12} /><Cell $ml={11}><Search w={16} c="#bbb" /></Cell><Cell $ml={7}><Mask w={12} /></Cell><Cell $ml={10}><SubLayer w={14} /></Cell><Cell $ml={12}><NewLayer w={11} /></Cell><Cell $ml={12}><Trash w={11} /></Cell>
          </Pad>
          <Bar $h={2} $bg="#343434" />
          <Bar $h={25} $bg="#434343">
            <Tab $w={37} $pl={8}><Label $s={11} $c="#8c8c8c">変形</Label></Tab>
            <Tab $w={42} $on $pl={4}><Diamond w={5} /><Label $s={11} $ml={5} $b $c="#eee" $ls={-0.6}>整列</Label></Tab>
            <Tab $w={80} $pl={7}><Label $s={11} $ls={-3.1} $c="#8c8c8c">パスファインダー</Label></Tab>
            <Grow /><Menu w={10} /><Vert $w={5} $c="transparent" />
          </Bar>
        </Column>
      </Body>
      <TaskRow $h={30} $bg="linear-gradient(90deg,#1c2740,#1c2b48 60%,#18233c)">
        <Task $w={31} $ml={5}><EdgeI w={15} /></Task>
        <Task $w={31} $ml={7} $run><svg width="17" height="14" viewBox="0 0 17 14"><path d="M0 0H7L9 2H16V14H0Z" fill="#f5b82e" /><path d="M0 4H17V14H0Z" fill="#ffdf70" /><path d="M3 14V9Q8.500 6 14 9V14H11V11H6V14Z" fill="#3b9be0" /></svg></Task>
        <Task $w={31} $ml={6}><svg width="18" height="17" viewBox="0 0 18 17"><path d="M6 4Q9-2 12 4" fill="none" stroke="#aaa" strokeWidth="1.500" /><path d="M0 4H18L17.500 17H.500Z" fill="#fff" /><path d="M5 7H8.500V10.500H5Z" fill="#f25022" /><path d="M9.500 7H13V10.500H9.500Z" fill="#7fba00" /><path d="M5 11.500H8.500V15H5Z" fill="#00a4ef" /><path d="M9.500 11.500H13V15H9.500Z" fill="#ffb900" /></svg></Task>
        <Task $w={31} $ml={6}><MailI w={19} /></Task>
        <Task $w={31} $ml={7} $run><svg width="18" height="18" viewBox="0 0 18 18"><rect width="18" height="18" fill="#0754b8" /><path d="M0 0L18 18V10L8 0Z" fill="#0d79dc" /><path d="M2 4C5 4 6 15 8 15C10 15 10 3 17 3" fill="none" stroke="#fff" strokeWidth="1.200" /></svg></Task>
        <Task $w={36} $ml={3} $on $run><Adobe $s={17} $c="#ee7d18" $bg="#291304">Ai</Adobe></Task>
        <Task $w={31} $ml={4} $run><PaintI w={18} /></Task>
        <Grow />
        <Tray $ml={0} $w={10}><Up w={10} /></Tray>
        <Tray $ml={7} $w={13}><svg width="13" height="8" viewBox="0 0 13 8"><path d="M3 8A2.800 2.800 0 0 1 2 3A4 4 0 0 1 9.500 2.500A2.800 2.800 0 0 1 11 8Z" fill="#1590e4" /></svg></Tray>
        <Tray $ml={7} $w={10}><Usb w={10} /></Tray><Tray $ml={7} $w={12}><Battery w={12} /></Tray><Tray $ml={8} $w={9}><Wifi w={10} /></Tray><Tray $ml={6} $w={12}><Vol w={12} mute /></Tray>
        <Tray $ml={7} $w={10}><Label $s={14} $c="#e8e8e8">A</Label></Tray>
        <Clock $ml={7} $w={48} $s={8.8} $lh={14}><span>15:17</span><span>2019/10/31</span></Clock>
        <Tray $ml={12} $w={19}><Notice w={19} /></Tray><Vert $w={1} $ml={9} $c="#56606e" /><Vert $w={2} $c="transparent" />
      </TaskRow>
    </Shot>
  );
}

export default function App() {
  return (
    <Slide lang="ja">
      <Global />
      <Title>{titleGlyphs.map(([g, gap, w, s, k], i) => <Glyph key={i} $gap={gap} $w={w} $s={s} $stroke={k}>{g}</Glyph>)}</Title>
      <Shots><LeftShot /><RightShot /></Shots>
      <FloatPanel>
        <Bar $h={16} $bg="#434343">
          <Tab $w={29} $on $pl={3}><Diamond /><Label $s={8} $b $ml={1} $ls={-2.4} $c="#eee">カラー</Label></Tab>
          <Tab $w={43} $pl={5}><Label $s={8} $ls={-2.5} $c="#aaa">カラーガイド</Label></Tab>
          <Grow /><Dbl /><Rule $h={7} $ml={3} $c="#888" /><Cell $ml={4} $w={9}><Menu w={6} /></Cell>
        </Bar>
        <Pad $h={15} $pl={3}><svg width="24" height="14" viewBox="0 -6 24 14"><path d="M.5.500H7.500V7.500H.500Z" fill="#fff" stroke="#222" /><path d="M0 8L8 0" stroke="#e22" strokeWidth="1.500" /><path d="M8 0H16V8H8Z" fill="#000" /><path d="M16 .500H23V7.500H16Z" fill="#fff" stroke="#333" strokeWidth=".6" /></svg></Pad>
        <Spectrum /><Grip><Handle /></Grip>
      </FloatPanel>
      <Tooltip>RDG_WHITE</Tooltip>
      <ArrowLayer width="494" height="224" viewBox="0 0 494 224">
        <path d="M1 58H382.500V3.500L490 111.500L382.500 219.500V165H1Z" fill="#f00" stroke="#41719c" strokeWidth="1.600" />
      </ArrowLayer>
    </Slide>
  );
}
